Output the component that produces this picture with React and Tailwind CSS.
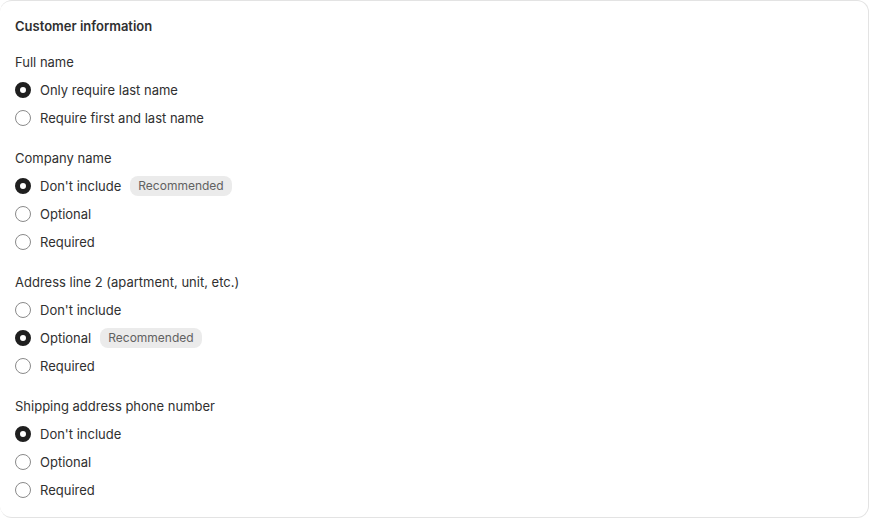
import React, { useState } from "react";

const sections = [
  {
    key: "fullName",
    label: "Full name",
    options: ["Only require last name", "Require first and last name"],
    selected: 0,
  },
  {
    key: "company",
    label: "Company name",
    options: ["Don't include", "Optional", "Required"],
    selected: 0,
    recommended: 0,
  },
  {
    key: "address2",
    label: "Address line 2 (apartment, unit, etc.)",
    options: ["Don't include", "Optional", "Required"],
    selected: 1,
    recommended: 1,
  },
  {
    key: "phone",
    label: "Shipping address phone number",
    options: ["Don't include", "Optional", "Required"],
    selected: 0,
  },
];

const Radio = ({ checked }) => (
  <span
    className={`w-4 h-4 rounded-full shrink-0 bg-white ${
      checked ? "border-[5px] border-[#1f1f1f]" : "border border-[#8a8a8a]"
    }`}
  />
);

const Section = ({ section }) => {
  const [value, setValue] = useState(section.selected);
  return (
    <div className="flex flex-col gap-2">
      <div className="h-5 leading-5">{section.label}</div>
      {section.options.map((opt, i) => (
        <label
          key={opt}
          className="flex items-center h-5 gap-[9px] cursor-pointer"
          onClick={() => setValue(i)}
        >
          <Radio checked={value === i} />
          <span className="leading-5">{opt}</span>
          {section.recommended === i && (
            <span className="h-5 px-2 rounded-lg bg-[#ebebeb] text-[#616161] text-[12px] leading-5">
              Recommended
            </span>
          )}
        </label>
      ))}
    </div>
  );
};

export default function App() {
  return (
    <div
      className="w-[870px] h-[519px] bg-white text-[#303030] text-[13px]"
      style={{ fontFamily: "Inter, 'Noto Sans', sans-serif" }}
    >
      <div className="w-[869px] h-[518px] bg-white rounded-xl border-t border-r border-b border-[#e3e3e3] pl-[15px] pt-[15px] flex flex-col gap-4">
        <h2 className="h-5 leading-5 font-semibold">Customer information</h2>
        <div className="flex flex-col gap-5">
          {sections.map((s) => (
            <Section key={s.key} section={s} />
          ))}
        </div>
      </div>
    </div>
  );
}
